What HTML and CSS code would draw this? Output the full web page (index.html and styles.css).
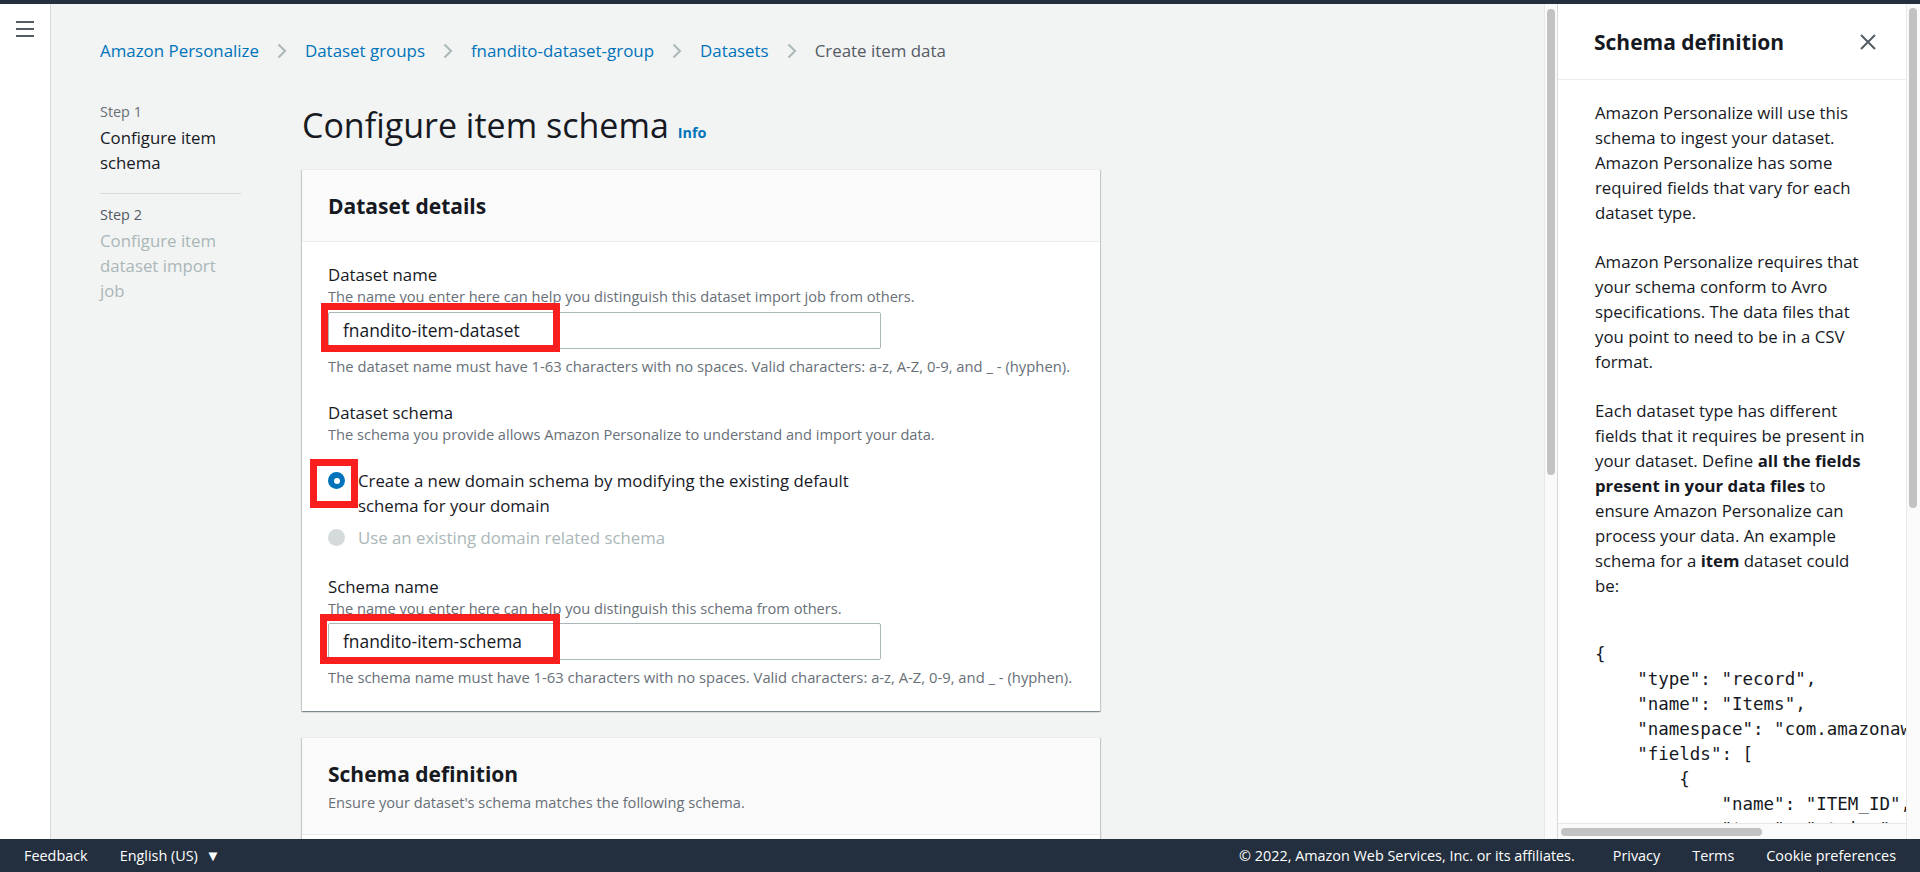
FILE: index.html
```html
<!DOCTYPE html>
<html lang="en">
<head>
<meta charset="utf-8">
<title>Configure item schema</title>
<link rel="stylesheet" href="styles.css">
</head>
<body>
<div class="topbar"></div>
<div class="app">
  <nav class="rail">
    <svg class="hamburger" width="18" height="16" viewBox="0 0 18 16"><path d="M0 1h18M0 8h18M0 15h18" stroke="#545b64" stroke-width="2" fill="none"/></svg>
  </nav>
  <main class="main">
    <div class="breadcrumbs">
      <a class="crumb">Amazon Personalize</a>
      <svg class="chev" width="10" height="16" viewBox="0 0 10 16"><path d="M1.5 1.5L8 8l-6.5 6.5" stroke="#aab7b8" stroke-width="2" fill="none"/></svg>
      <a class="crumb">Dataset groups</a>
      <svg class="chev" width="10" height="16" viewBox="0 0 10 16"><path d="M1.5 1.5L8 8l-6.5 6.5" stroke="#aab7b8" stroke-width="2" fill="none"/></svg>
      <a class="crumb">fnandito-dataset-group</a>
      <svg class="chev" width="10" height="16" viewBox="0 0 10 16"><path d="M1.5 1.5L8 8l-6.5 6.5" stroke="#aab7b8" stroke-width="2" fill="none"/></svg>
      <a class="crumb">Datasets</a>
      <svg class="chev" width="10" height="16" viewBox="0 0 10 16"><path d="M1.5 1.5L8 8l-6.5 6.5" stroke="#aab7b8" stroke-width="2" fill="none"/></svg>
      <span class="crumb current">Create item data</span>
    </div>
    <div class="layout">
      <ol class="steps">
        <li class="step">
          <div class="step-num">Step 1</div>
          <div class="step-title">Configure item schema</div>
        </li>
        <li class="step step-next">
          <div class="step-num">Step 2</div>
          <div class="step-title">Configure item dataset import job</div>
        </li>
      </ol>
      <div class="content">
        <h1 class="page-title">Configure item schema<a class="info">Info</a></h1>

        <section class="card">
          <div class="card-header">
            <h2 class="card-title">Dataset details</h2>
          </div>
          <div class="card-body">
            <div class="field">
              <div class="label">Dataset name</div>
              <div class="desc">The name you enter here can help you distinguish this dataset import job from others.</div>
              <div class="control">
                <div class="input">fnandito-item-dataset</div>
                <div class="mark mark-input1"></div>
              </div>
              <div class="constraint">The dataset name must have 1-63 characters with no spaces. Valid characters: a-z, A-Z, 0-9, and _ - (hyphen).</div>
            </div>
            <div class="field">
              <div class="label">Dataset schema</div>
              <div class="desc">The schema you provide allows Amazon Personalize to understand and import your data.</div>
              <div class="radios">
                <div class="radio-row">
                  <span class="radio-wrap">
                    <span class="radio checked"></span>
                    <span class="mark mark-radio"></span>
                  </span>
                  <span class="radio-label">Create a new domain schema by modifying the existing default schema for your domain</span>
                </div>
                <div class="radio-row disabled">
                  <span class="radio-wrap"><span class="radio off"></span></span>
                  <span class="radio-label">Use an existing domain related schema</span>
                </div>
              </div>
            </div>
            <div class="field">
              <div class="label">Schema name</div>
              <div class="desc">The name you enter here can help you distinguish this schema from others.</div>
              <div class="control control2">
                <div class="input">fnandito-item-schema</div>
                <div class="mark mark-input2"></div>
              </div>
              <div class="constraint">The schema name must have 1-63 characters with no spaces. Valid characters: a-z, A-Z, 0-9, and _ - (hyphen).</div>
            </div>
          </div>
        </section>

        <section class="card card2">
          <div class="card-header">
            <h2 class="card-title">Schema definition</h2>
            <div class="card-sub">Ensure your dataset's schema matches the following schema.</div>
          </div>
          <div class="card-body card2-body"></div>
        </section>
      </div>
    </div>
  </main>
  <div class="main-scroll"><div class="main-thumb"></div></div>
  <aside class="panel">
    <div class="panel-view">
      <div class="panel-header">
        <h2 class="panel-title">Schema definition</h2>
        <svg class="close" width="16" height="16" viewBox="0 0 16 16"><path d="M1 1l14 14M15 1L1 15" stroke="#545b64" stroke-width="2" fill="none"/></svg>
      </div>
      <div class="panel-body">
        <p>Amazon Personalize will use this schema to ingest your dataset. Amazon Personalize has some required fields that vary for each dataset type.</p>
        <p>Amazon Personalize requires that your schema conform to Avro specifications. The data files that you point to need to be in a CSV format.</p>
        <p>Each dataset type has different fields that it requires be present in your dataset. Define <b>all the fields present in your data files</b> to ensure Amazon Personalize can process your data. An example schema for a <b>item</b> dataset could be:</p>
<pre class="code">{
    "type": "record",
    "name": "Items",
    "namespace": "com.amazonaws.personalize.schema",
    "fields": [
        {
            "name": "ITEM_ID",
            "type": "string"</pre>
      </div>
    </div>
    <div class="panel-vscroll"><div class="panel-vthumb"></div></div>
    <div class="panel-hscroll"><div class="panel-hthumb"></div></div>
  </aside>
</div>
<footer class="footer">
  <span class="f-item">Feedback</span>
  <span class="f-item">English (US) <span class="caret">&#9660;</span></span>
  <span class="f-spacer"></span>
  <span class="f-item f-copy">&copy; 2022, Amazon Web Services, Inc. or its affiliates.</span>
  <span class="f-item">Privacy</span>
  <span class="f-item">Terms</span>
  <span class="f-item">Cookie preferences</span>
</footer>
</body>
</html>
```

FILE: styles.css
```css
* { box-sizing: border-box; }
html, body { margin: 0; padding: 0; }
body {
  width: 1920px;
  height: 872px;
  overflow: hidden;
  display: flex;
  flex-direction: column;
  font-family: "Open Sans", "Noto Sans", sans-serif;
  color: #16191f;
  background: #f2f3f3;
}
.topbar { height: 4px; background: #232f3e; flex-shrink: 0; }
.app { flex: 1; display: flex; overflow: hidden; min-height: 0; }

.rail {
  width: 51px;
  flex-shrink: 0;
  background: #fff;
  border-right: 1px solid #d5dbdb;
  padding: 17px 0 0 16px;
}
.hamburger { display: block; }

.main {
  flex: 1;
  min-width: 0;
  overflow: hidden;
  background: #f2f3f3;
  padding: 34px 0 0 49px;
}
.breadcrumbs { display: flex; align-items: center; font-size: 16.9px; line-height: 25px; }
.crumb { color: #0073bb; text-decoration: none; }
.crumb.current { color: #545b64; }
.chev { margin: 0 18px; display: block; }

.layout {
  display: grid;
  grid-template-columns: 141px 798px;
  column-gap: 61px;
  margin-top: 38px;
  align-items: start;
}
.steps { list-style: none; margin: 0; padding: 0; }
.step-num { font-size: 14.4px; line-height: 22px; color: #687078; }
.step-title { font-size: 16.8px; line-height: 25px; margin-top: 2px; color: #16191f; }
.step { padding-bottom: 18px; border-bottom: 1px solid #d5dbdb; }
.step-next { border-bottom: none; padding-top: 10px; }
.step-next .step-num { color: #545b64; }
.step-next .step-title { color: #aab7b8; margin-top: 2px; }

.page-title {
  margin: 4px 0 0;
  font-size: 34px;
  line-height: 40px;
  font-weight: 400;
  color: #16191f;
}
.info { font-size: 14.4px; line-height: 1; font-weight: 700; color: #0073bb; margin-left: 9px; }

.card {
  margin-top: 24px;
  background: #fff;
  border-top: 1px solid #eaeded;
  box-shadow: 0 1px 1px 0 rgba(0,28,36,.3), 1px 1px 1px 0 rgba(0,28,36,.15), -1px 1px 1px 0 rgba(0,28,36,.15);
}
.card2 { margin-top: 26px; }
.card-header {
  background: #fafafa;
  border-bottom: 1px solid #eaeded;
  padding: 21px 26px 20px;
}
.card2 .card-header { padding-bottom: 22px; }
.card-title { margin: 0; font-size: 21px; line-height: 30px; font-weight: 700; }
.card-sub { font-size: 14.6px; line-height: 20px; color: #687078; margin-top: 3px; }
.card-body { padding: 20px 26px 24px; }
.card2-body { height: 120px; }

.field + .field { margin-top: 24px; }
.label { font-size: 16.8px; line-height: 25px; color: #16191f; }
.desc { font-size: 14.6px; line-height: 20px; color: #687078; margin-top: -1px; }
.control { position: relative; width: 553px; margin-top: 6px; }
.control2 { margin-top: 5px; }
.input {
  height: 37px;
  border: 1px solid #aab7b8;
  border-radius: 2px;
  background: #fff;
  padding: 0 14px;
  font-size: 17.4px;
  line-height: 35px;
  color: #16191f;
}
.constraint { font-size: 14.8px; line-height: 20px; color: #687078; margin-top: 7px; }

.mark { position: absolute; border: 7px solid #f91f1f; pointer-events: none; }
.mark-input1 { left: -7px; top: -9px; width: 239px; height: 49px; }
.mark-input2 { left: -8px; top: -9px; width: 240px; height: 50px; }
.mark-radio { left: -18px; top: -13px; width: 48px; height: 49px; }

.radios { margin-top: 24px; width: 553px; }
.radio-row { display: flex; align-items: flex-start; }
.radio-row + .radio-row { margin-top: 7px; }
.radio-wrap { position: relative; width: 17px; height: 17px; margin: 4px 13px 0 0; flex-shrink: 0; }
.radio { display: block; width: 17px; height: 17px; border-radius: 50%; }
.radio.checked { background: #0073bb; position: relative; }
.radio.checked::after {
  content: "";
  position: absolute;
  left: 5.5px; top: 5.5px;
  width: 6px; height: 6px;
  border-radius: 50%;
  background: #fff;
}
.radio.off { background: #d5dbdb; }
.radio-label { font-size: 16.8px; line-height: 25px; color: #16191f; }
.disabled .radio-label { color: #aab7b8; }

.main-scroll {
  width: 13px;
  flex-shrink: 0;
  background: #fafafa;
  border-left: 1px solid #e8e8e8;
  padding: 5px 0 0 2px;
}
.main-thumb { width: 8px; height: 466px; border-radius: 4px; background: #c2c2c2; }

.panel {
  width: 363px;
  flex-shrink: 0;
  background: #fff;
  border-left: 1px solid #d5dbdb;
  display: grid;
  grid-template-columns: 348px 14px;
  grid-template-rows: 1fr 16px;
  min-height: 0;
}
.panel-view { grid-column: 1; grid-row: 1; overflow: hidden; min-height: 0; }
.panel-vscroll {
  grid-column: 2; grid-row: 1 / 3;
  background: #fafafa;
  border-left: 1px solid #e8e8e8;
  padding: 4px 0 0 2px;
}
.panel-vthumb { width: 8px; height: 500px; border-radius: 4px; background: #c2c2c2; }
.panel-hscroll {
  grid-column: 1; grid-row: 2;
  background: #fafafa;
  border-top: 1px solid #e8e8e8;
  padding: 4px 0 0 3px;
}
.panel-hthumb { width: 201px; height: 8px; border-radius: 4px; background: #c2c2c2; }

.panel-header {
  display: flex;
  align-items: center;
  justify-content: space-between;
  padding: 23px 30px 22px 36px;
  border-bottom: 1px solid #eaeded;
}
.panel-title { margin: 0; font-size: 21px; line-height: 30px; font-weight: 700; }
.close { display: block; }
.panel-body { padding: 20px 35px 0 37px; width: 348px; font-size: 16.8px; line-height: 25px; color: #16191f; }
.panel-body p { margin: 0 0 24px; }
.panel-body b { font-weight: 700; }
.code {
  margin: 44px 0 0;
  font-family: "DejaVu Sans Mono", "Liberation Mono", monospace;
  font-size: 17.5px;
  line-height: 25px;
  color: #16191f;
  white-space: pre;
  overflow: visible;
}

.footer {
  height: 33px;
  flex-shrink: 0;
  background: #232f3e;
  color: #fff;
  display: flex;
  align-items: center;
  padding: 0 24px;
  gap: 32px;
  font-size: 14.4px;
  line-height: 20px;
}
.f-spacer { flex: 1; }
.f-copy { margin-right: 6px; }
.caret { font-size: 15px; margin-left: 4px; }
```
